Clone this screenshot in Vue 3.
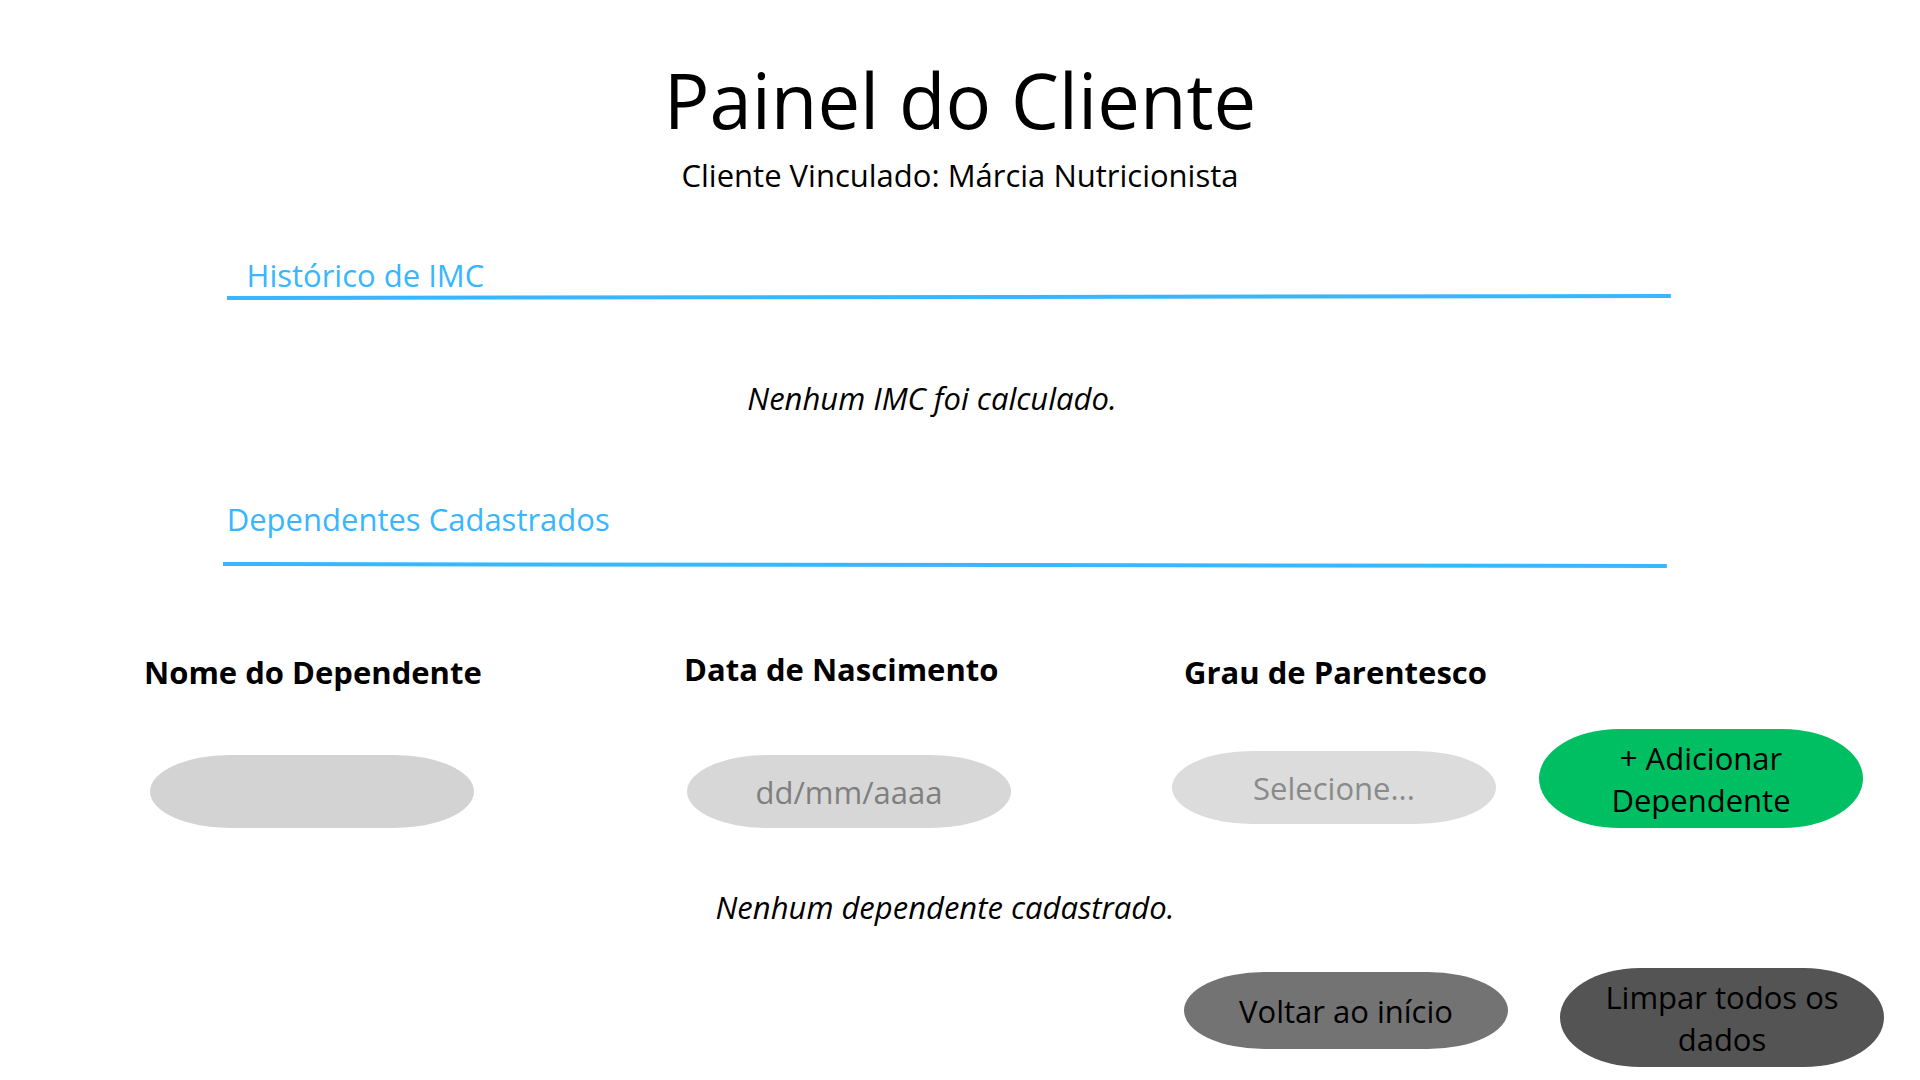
<script setup>
import { ref } from 'vue'

const nome = ref('')
const nascimento = ref('')
const parentesco = ref('')
const graus = ['Filho(a)', 'Cônjuge', 'Pai ou mãe', 'Outro']
</script>

<template>
  <main class="painel">
    <header class="topo">
      <h1 class="titulo">Painel do Cliente</h1>
      <p class="vinculo">Cliente Vinculado: Márcia Nutricionista</p>
    </header>

    <section class="historico">
      <div class="secao secao-historico">
        <h2 class="subtitulo recuado">Histórico de IMC</h2>
        <svg class="linha" aria-hidden="true">
          <line x1="0" y1="3" x2="100%" y2="1" />
        </svg>
      </div>
      <p class="vazio vazio-imc">Nenhum IMC foi calculado.</p>
    </section>

    <section class="dependentes">
      <div class="secao secao-dependentes">
        <h2 class="subtitulo">Dependentes Cadastrados</h2>
        <svg class="linha" aria-hidden="true">
          <line x1="0" y1="2" x2="100%" y2="4" />
        </svg>
      </div>

      <form class="formulario" @submit.prevent>
        <div class="campo campo-nome">
          <label for="nome">Nome do Dependente</label>
          <input id="nome" v-model="nome" class="pilula" type="text" />
        </div>
        <div class="campo campo-data">
          <label for="nascimento">Data de Nascimento</label>
          <input id="nascimento" v-model="nascimento" class="pilula" type="text" placeholder="dd/mm/aaaa" />
        </div>
        <div class="campo campo-grau">
          <label for="parentesco">Grau de Parentesco</label>
          <select id="parentesco" v-model="parentesco" class="pilula">
            <option value="">Selecione...</option>
            <option v-for="grau in graus" :key="grau" :value="grau">{{ grau }}</option>
          </select>
        </div>
        <button class="pilula alta adicionar" type="submit">+ Adicionar Dependente</button>
      </form>

      <p class="vazio vazio-dependentes">Nenhum dependente cadastrado.</p>
    </section>

    <footer class="acoes">
      <button class="pilula voltar" type="button">Voltar ao início</button>
      <button class="pilula alta limpar" type="button">Limpar todos os dados</button>
    </footer>
  </main>
</template>

<style>
body {
  margin: 0;
  background: #ffffff;
}
</style>

<style scoped>
.painel {
  padding: 48px 0 13px;
  font-family: "Open Sans", "Noto Sans", sans-serif;
  font-size: 31px;
  line-height: 42px;
  color: #000000;
}

h1,
h2,
p {
  margin: 0;
  font-weight: 400;
}

.topo {
  text-align: center;
}

.titulo {
  font-size: 76px;
  line-height: 104px;
}

.vinculo {
  margin-top: 2px;
}

.secao {
  width: 75.2%;
}

.secao-historico {
  margin: 59px 0 0 11.8%;
}

.secao-dependentes {
  margin: 80px 0 0 11.6%;
}

.subtitulo {
  padding-left: 4px;
  font-size: 31px;
  line-height: 40px;
  color: #38b6ff;
}

.recuado {
  padding-left: 20px;
}

.linha {
  display: block;
  width: 100%;
  height: 6px;
  overflow: visible;
}

.secao-dependentes .linha {
  margin-top: 23px;
}

.linha line {
  stroke: #38b6ff;
  stroke-width: 4px;
}

.vazio {
  font-style: italic;
  text-align: center;
}

.vazio-imc {
  margin-top: 76px;
  padding-right: 56px;
}

.vazio-dependentes {
  margin-top: 58px;
  padding-right: 30px;
}

.formulario {
  display: grid;
  grid-template-columns: 540fr 488fr 367fr 381fr;
  align-items: end;
  margin-top: 80px;
  padding-left: 7.5%;
}

.campo {
  display: flex;
  flex-direction: column;
  align-items: flex-start;
  gap: 62px;
}

.campo label {
  font-weight: 700;
}

.campo-nome .pilula {
  margin-left: 6px;
  background: #d3d3d3;
}

.campo-data {
  gap: 65px;
}

.campo-data .pilula {
  margin-left: 3px;
  background: #d7d7d7;
}

.campo-grau {
  gap: 58px;
  padding-bottom: 4px;
}

.campo-grau label {
  padding-left: 12px;
}

.campo-grau .pilula {
  background: #dcdcdc;
  color: #8a8a8a;
}

.pilula {
  box-sizing: border-box;
  width: 324px;
  height: 73px;
  margin: 0;
  padding: 0 32px;
  border: 0;
  border-radius: 80px / 50%;
  appearance: none;
  font: inherit;
  color: #000000;
  text-align: center;
  text-align-last: center;
}

.pilula::placeholder {
  color: #7f7f7f;
  opacity: 1;
}

.alta {
  height: 99px;
}

button.pilula,
select.pilula {
  cursor: pointer;
}

.adicionar {
  background: #00bf63;
}

.acoes {
  display: flex;
  justify-content: flex-end;
  align-items: flex-start;
  gap: 52px;
  margin-top: 40px;
  padding-right: 36px;
}

.voltar {
  height: 77px;
  margin-top: 4px;
  background: #737373;
}

.limpar {
  background: #545454;
}
</style>
